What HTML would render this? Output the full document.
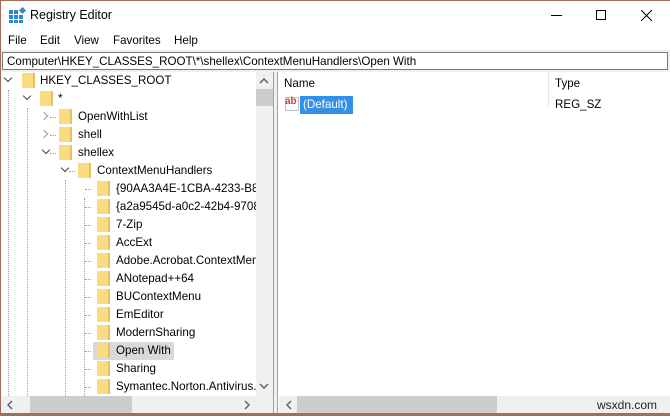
<!DOCTYPE html><html><head><style>
*{margin:0;padding:0;box-sizing:border-box}
body{width:670px;height:416px;overflow:hidden;background:#fff;font-family:"Liberation Sans",sans-serif;font-size:11.6px;color:#000;position:relative}
.a{position:absolute}
.row{position:absolute;height:18px;line-height:18px;white-space:nowrap}
.f{position:absolute;width:13px;height:15px;background:#fbdb7f;border-right:2px solid #e9c25e;top:1px}
.vd{position:absolute;border-left:1px dotted #a0a0a0;width:0}
.hd{position:absolute;border-top:1px dotted #a0a0a0;height:0;width:6px;top:9px}
.ch{position:absolute;top:4px;width:6px;height:6px;border-right:1.5px solid #444;border-bottom:1.5px solid #444}
.ch.o{transform:rotate(45deg)}
.ch.c{transform:rotate(-45deg);border-color:#999;top:5px}
</style></head><body>
<div class="a" style="left:0;top:0;width:670px;height:1px;background:#a36a5a"></div>
<div class="a" style="left:0;top:0;width:1px;height:416px;background:#a36a5a"></div>
<div class="a" style="left:0;top:413px;width:670px;height:3px;background:#9d6f63"></div>
<svg class="a" style="left:9px;top:7px" width="18" height="16"><g fill="#2a8ad4"><rect x="0" y="3" width="4" height="4"/><rect x="5" y="3" width="4" height="4"/><rect x="0" y="8" width="4" height="4"/><rect x="5" y="8" width="4" height="4"/><rect x="10" y="8" width="4" height="4"/><rect x="0" y="13" width="4" height="3"/><rect x="5" y="13" width="4" height="3"/><rect x="10" y="13" width="4" height="3"/><rect x="11" y="1" width="5" height="5" transform="rotate(45 13.5 3.5)"/></g></svg>
<div class="a" style="left:30px;top:8px;font-size:12.5px">Registry Editor</div>
<div class="a" style="left:551px;top:15px;width:11px;height:1px;background:#000"></div>
<div class="a" style="left:596px;top:10px;width:10px;height:10px;border:1px solid #000"></div>
<svg class="a" style="left:641px;top:10px" width="11" height="11"><path d="M0 0L11 11M11 0L0 11" stroke="#000" stroke-width="1"/></svg>
<div class="a" style="left:8px;top:34px">File</div>
<div class="a" style="left:40px;top:34px">Edit</div>
<div class="a" style="left:74px;top:34px">View</div>
<div class="a" style="left:113px;top:34px">Favorites</div>
<div class="a" style="left:174px;top:34px">Help</div>
<div class="a" style="left:1px;top:50px;width:669px;height:22px;background:#f0f0f0"></div>
<div class="a" style="left:2px;top:52px;width:666px;height:18px;background:#fff;border:1px solid #7a7a7a;line-height:17px;padding-left:4px">Computer\HKEY_CLASSES_ROOT\*\shellex\ContextMenuHandlers\Open With</div>
<div class="a" style="left:273px;top:72px;width:5px;height:341px;background:#f0f0f0;border-left:1px solid #a0a0a0;border-right:1px solid #a0a0a0"></div>
<div class="a" style="left:256px;top:72px;width:17px;height:324px;background:#f0f0f0"></div>
<div class="a" style="left:256px;top:89px;width:17px;height:17px;background:#cdcdcd"></div>
<svg class="a" style="left:259px;top:78px" width="10" height="6"><path d="M1 5L5 1L9 5" fill="none" stroke="#606060" stroke-width="1.5"/></svg>
<svg class="a" style="left:259px;top:383px" width="10" height="6"><path d="M1 1L5 5L9 1" fill="none" stroke="#606060" stroke-width="1.5"/></svg>
<div class="a" style="left:1px;top:396px;width:272px;height:17px;background:#f0f0f0"></div>
<div class="a" style="left:30px;top:396px;width:102px;height:17px;background:#cdcdcd"></div>
<svg class="a" style="left:7px;top:400px" width="6" height="10"><path d="M5 1L1 5L5 9" fill="none" stroke="#606060" stroke-width="1.5"/></svg>
<svg class="a" style="left:244px;top:400px" width="6" height="10"><path d="M1 1L5 5L1 9" fill="none" stroke="#606060" stroke-width="1.5"/></svg>
<div class="a" style="left:0;top:72px;width:256px;height:324px;overflow:hidden">
<div class="vd" style="left:8px;top:18px;height:306px"></div>
<div class="vd" style="left:27px;top:36px;height:288px"></div>
<div class="vd" style="left:65px;top:108px;height:216px"></div>
<div class="vd" style="left:84px;top:126px;height:198px"></div>
<div class="row" style="top:0;left:0"><div class="ch o" style="left:5px;top:3px"></div><div class="f" style="left:22px"></div><span style="position:absolute;left:40px">HKEY_CLASSES_ROOT</span></div>
<div class="row" style="top:18px;left:19px"><div class="ch o" style="left:5px;top:3px"></div><div class="f" style="left:21px"></div><span style="position:absolute;left:39px">*</span></div>
<div class="row" style="top:36px;left:38px"><div class="ch c" style="left:3px"></div><div class="hd" style="left:12px"></div><div class="f" style="left:21px"></div><span style="position:absolute;left:40px">OpenWithList</span></div>
<div class="row" style="top:54px;left:38px"><div class="ch c" style="left:3px"></div><div class="hd" style="left:12px"></div><div class="f" style="left:21px"></div><span style="position:absolute;left:40px">shell</span></div>
<div class="row" style="top:72px;left:38px"><div class="ch o" style="left:5px;top:3px"></div><div class="hd" style="left:12px"></div><div class="f" style="left:21px"></div><span style="position:absolute;left:40px">shellex</span></div>
<div class="row" style="top:90px;left:57px"><div class="ch o" style="left:5px;top:3px"></div><div class="hd" style="left:12px"></div><div class="f" style="left:21px"></div><span style="position:absolute;left:40px">ContextMenuHandlers</span></div>
<div class="row" style="top:108px;left:85px"><div class="hd" style="left:0"></div><div class="f" style="left:12px"></div><span style="position:absolute;left:31px">{90AA3A4E-1CBA-4233-B8BB-535773D48449}</span></div>
<div class="row" style="top:126px;left:85px"><div class="hd" style="left:0"></div><div class="f" style="left:12px"></div><span style="position:absolute;left:31px">{a2a9545d-a0c2-42b4-9708-A0B2BADD77C8}</span></div>
<div class="row" style="top:144px;left:85px"><div class="hd" style="left:0"></div><div class="f" style="left:12px"></div><span style="position:absolute;left:31px">7-Zip</span></div>
<div class="row" style="top:162px;left:85px"><div class="hd" style="left:0"></div><div class="f" style="left:12px"></div><span style="position:absolute;left:31px">AccExt</span></div>
<div class="row" style="top:180px;left:85px"><div class="hd" style="left:0"></div><div class="f" style="left:12px"></div><span style="position:absolute;left:31px">Adobe.Acrobat.ContextMenu</span></div>
<div class="row" style="top:198px;left:85px"><div class="hd" style="left:0"></div><div class="f" style="left:12px"></div><span style="position:absolute;left:31px">ANotepad++64</span></div>
<div class="row" style="top:216px;left:85px"><div class="hd" style="left:0"></div><div class="f" style="left:12px"></div><span style="position:absolute;left:31px">BUContextMenu</span></div>
<div class="row" style="top:234px;left:85px"><div class="hd" style="left:0"></div><div class="f" style="left:12px"></div><span style="position:absolute;left:31px">EmEditor</span></div>
<div class="row" style="top:252px;left:85px"><div class="hd" style="left:0"></div><div class="f" style="left:12px"></div><span style="position:absolute;left:31px">ModernSharing</span></div>
<div class="a" style="left:93px;top:270px;width:81px;height:18px;background:#d9d9d9"></div>
<div class="row" style="top:270px;left:85px"><div class="hd" style="left:0"></div><div class="f" style="left:12px"></div><span style="position:absolute;left:31px">Open With</span></div>
<div class="row" style="top:288px;left:85px"><div class="hd" style="left:0"></div><div class="f" style="left:12px"></div><span style="position:absolute;left:31px">Sharing</span></div>
<div class="row" style="top:306px;left:85px"><div class="hd" style="left:0"></div><div class="f" style="left:12px"></div><span style="position:absolute;left:31px">Symantec.Norton.Antivirus.IEContextMenu</span></div>
</div>
<div class="a" style="left:284px;top:77px">Name</div>
<div class="a" style="left:548px;top:72px;width:1px;height:34px;background:#e5e5e5"></div>
<div class="a" style="left:555px;top:77px">Type</div>
<div class="a" style="left:285px;top:97px;width:14px;height:14px;border:1px solid #bbb;background:#fff;border-radius:1px"></div>
<div class="a" style="left:285px;top:96px;font-size:10px;font-weight:bold;color:#c8452f">ab</div>
<div class="a" style="left:300px;top:96px;width:53px;height:18px;background:#3390e6;color:#fff;line-height:18px;padding-left:3px">(Default)</div>
<div class="a" style="left:555px;top:98px">REG_SZ</div>
<div class="a" style="left:279px;top:396px;width:391px;height:17px;background:#f0f0f0"></div>
<div class="a" style="left:297px;top:396px;width:200px;height:17px;background:#cdcdcd"></div>
<svg class="a" style="left:286px;top:400px" width="6" height="10"><path d="M5 1L1 5L5 9" fill="none" stroke="#606060" stroke-width="1.5"/></svg>
<div class="a" style="left:597px;top:398px;font-size:12px;color:#222">wsxdn.com</div>
</body></html>
